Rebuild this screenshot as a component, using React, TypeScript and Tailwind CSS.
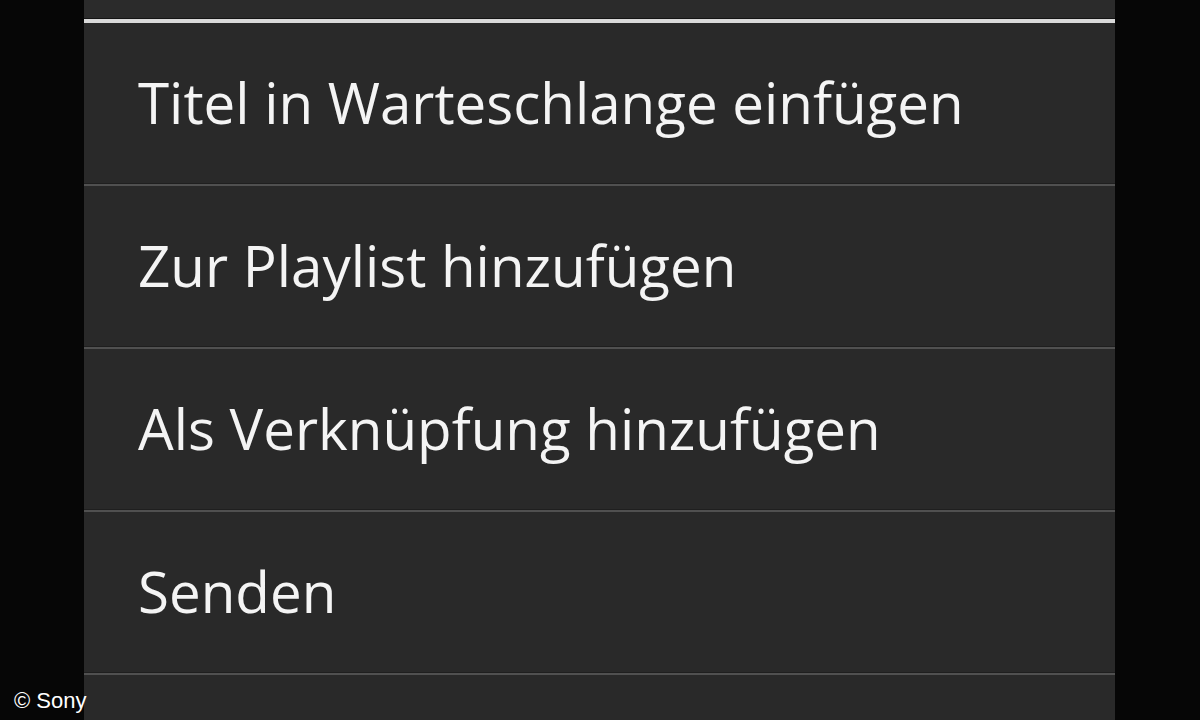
const items = [
  'Titel in Warteschlange einfügen',
  'Zur Playlist hinzufügen',
  'Als Verknüpfung hinzufügen',
  'Senden',
  '',
]

function MenuRow({ label }: { label: string }) {
  return (
    <>
      <div className="flex h-[160px] shrink-0 items-center pl-[54px]">
        <span className="text-[56.5px] leading-none text-[#f4f4f4]">{label}</span>
      </div>
      <div className="h-px shrink-0 bg-[#1f1f1f]" />
      <div className="h-[2px] shrink-0 bg-[#505050]" />
    </>
  )
}

export default function App() {
  return (
    <div
      className="relative flex h-[720px] w-[1200px] overflow-hidden bg-[#060606]"
      style={{ fontFamily: '"Open Sans", "Noto Sans", sans-serif' }}
    >
      <div className="ml-[84px] flex w-[1031px] flex-col bg-[#292929]">
        <div className="h-[18px] shrink-0 bg-[#2b2b2b]" />
        <div className="h-px shrink-0 bg-[#151515]" />
        <div className="h-[4px] shrink-0 bg-[#d9d9d9]" />
        {items.map((label, i) => (
          <MenuRow key={i} label={label} />
        ))}
      </div>
      <span
        className="absolute bottom-[8px] left-[14px] text-[22px] leading-none text-white"
        style={{ fontFamily: '"Liberation Sans", Arial, sans-serif' }}
      >
        © Sony
      </span>
    </div>
  )
}
